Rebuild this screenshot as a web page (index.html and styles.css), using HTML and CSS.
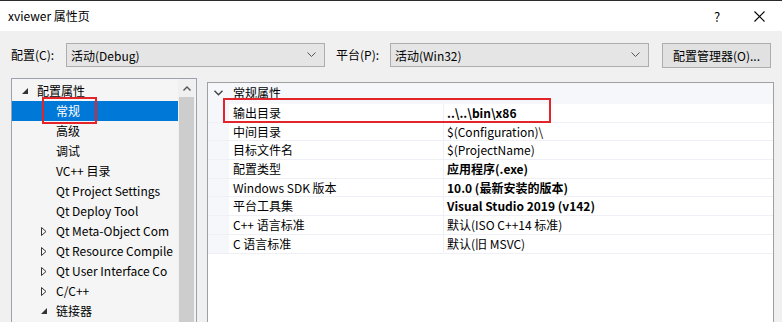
FILE: index.html
```html
<!DOCTYPE html>
<html lang="zh-CN">
<head>
  <meta charset="UTF-8">
  <title>xviewer 属性页</title>
  <link rel="stylesheet" href="styles.css">
</head>
<body>
  <div class="window">
    <header class="titlebar">
      <span class="title">xviewer 属性页</span>
      <div class="caption-btns">
        <span class="help">?</span>
        <span class="close">
          <svg width="11" height="11" viewBox="0 0 11 11"><path d="M0.5 0.5 L10.5 10.5 M10.5 0.5 L0.5 10.5" stroke="#000" stroke-width="1.1" fill="none"/></svg>
        </span>
      </div>
    </header>

    <div class="toolbar">
      <label class="lbl lbl-config">配置(C):</label>
      <div class="combo">
        <span>活动(Debug)</span>
        <svg class="chev" width="9" height="6" viewBox="0 0 9 6"><path d="M0.5 0.5 L4.5 4.5 L8.5 0.5" stroke="#555" fill="none"/></svg>
      </div>
      <label class="lbl lbl-platform">平台(P):</label>
      <div class="combo">
        <span>活动(Win32)</span>
        <svg class="chev" width="9" height="6" viewBox="0 0 9 6"><path d="M0.5 0.5 L4.5 4.5 L8.5 0.5" stroke="#555" fill="none"/></svg>
      </div>
      <button class="btn">配置管理器(O)...</button>
    </div>

    <div class="content">
      <div class="tree-panel">
        <ul class="tree">
          <li class="item lv0">
            <span class="twisty"><svg width="6" height="6" viewBox="0 0 6 6"><polygon points="6,0 6,6 0,6" fill="#333"/></svg></span>
            <span class="label">配置属性</span>
          </li>
          <li class="item lv1 selected">
            <span class="twisty"></span>
            <span class="label">常规</span>
            <span class="mark mark-tree"></span>
          </li>
          <li class="item lv1"><span class="twisty"></span><span class="label">高级</span></li>
          <li class="item lv1"><span class="twisty"></span><span class="label">调试</span></li>
          <li class="item lv1"><span class="twisty"></span><span class="label">VC++ 目录</span></li>
          <li class="item lv1"><span class="twisty"></span><span class="label">Qt Project Settings</span></li>
          <li class="item lv1"><span class="twisty"></span><span class="label">Qt Deploy Tool</span></li>
          <li class="item lv1">
            <span class="twisty"><svg width="6" height="9" viewBox="0 0 6 9"><polygon points="0.5,0.5 5,4.5 0.5,8.5" fill="none" stroke="#333"/></svg></span>
            <span class="label">Qt Meta-Object Com</span>
          </li>
          <li class="item lv1">
            <span class="twisty"><svg width="6" height="9" viewBox="0 0 6 9"><polygon points="0.5,0.5 5,4.5 0.5,8.5" fill="none" stroke="#333"/></svg></span>
            <span class="label">Qt Resource Compile</span>
          </li>
          <li class="item lv1">
            <span class="twisty"><svg width="6" height="9" viewBox="0 0 6 9"><polygon points="0.5,0.5 5,4.5 0.5,8.5" fill="none" stroke="#333"/></svg></span>
            <span class="label">Qt User Interface Co</span>
          </li>
          <li class="item lv1">
            <span class="twisty"><svg width="6" height="9" viewBox="0 0 6 9"><polygon points="0.5,0.5 5,4.5 0.5,8.5" fill="none" stroke="#333"/></svg></span>
            <span class="label">C/C++</span>
          </li>
          <li class="item lv1">
            <span class="twisty"><svg width="6" height="6" viewBox="0 0 6 6"><polygon points="6,0 6,6 0,6" fill="#333"/></svg></span>
            <span class="label">链接器</span>
          </li>
        </ul>
        <div class="vscroll">
          <div class="arrow">
            <svg width="8" height="5" viewBox="0 0 8 5"><path d="M0.5 4.5 L4 1 L7.5 4.5" stroke="#555" stroke-width="1.4" fill="none"/></svg>
          </div>
          <div class="thumb"></div>
        </div>
      </div>

      <div class="grid-panel">
        <div class="grid-header">
          <span class="gutter">
            <svg width="9" height="6" viewBox="0 0 9 6"><path d="M0.5 0.8 L4.5 4.8 L8.5 0.8" stroke="#444" stroke-width="1.4" fill="none"/></svg>
          </span>
          <span class="header-text">常规属性</span>
        </div>
        <div class="grid-row">
          <span class="gutter"></span>
          <span class="name">输出目录</span>
          <span class="value bold">..\..\bin\x86</span>
          <span class="mark mark-row"></span>
        </div>
        <div class="grid-row">
          <span class="gutter"></span>
          <span class="name">中间目录</span>
          <span class="value">$(Configuration)\</span>
        </div>
        <div class="grid-row">
          <span class="gutter"></span>
          <span class="name">目标文件名</span>
          <span class="value">$(ProjectName)</span>
        </div>
        <div class="grid-row">
          <span class="gutter"></span>
          <span class="name">配置类型</span>
          <span class="value bold">应用程序(.exe)</span>
        </div>
        <div class="grid-row">
          <span class="gutter"></span>
          <span class="name">Windows SDK 版本</span>
          <span class="value bold">10.0 (最新安装的版本)</span>
        </div>
        <div class="grid-row">
          <span class="gutter"></span>
          <span class="name">平台工具集</span>
          <span class="value bold">Visual Studio 2019 (v142)</span>
        </div>
        <div class="grid-row">
          <span class="gutter"></span>
          <span class="name">C++ 语言标准</span>
          <span class="value">默认(ISO C++14 标准)</span>
        </div>
        <div class="grid-row">
          <span class="gutter"></span>
          <span class="name">C 语言标准</span>
          <span class="value">默认(旧 MSVC)</span>
        </div>
      </div>
    </div>
  </div>
</body>
</html>
```

FILE: styles.css
```css
body {
  margin: 0;
  padding: 0;
  background: #f0f0f0;
  font-family: "Noto Sans CJK SC", sans-serif;
  font-size: 12px;
  color: #000;
  overflow: hidden;
}

.window {
  border-top: 1px solid #2b2b2b;
  height: 321px;
  overflow: hidden;
}

/* title bar */
.titlebar {
  height: 30px;
  background: #fff;
  display: flex;
  align-items: center;
  justify-content: space-between;
  padding-left: 8px;
}

.title {
  font-size: 12px;
  line-height: 16px;
}

.caption-btns {
  display: flex;
  align-items: center;
  height: 30px;
}

.help {
  width: 20px;
  text-align: center;
  font-size: 13px;
  margin-right: 27px;
}

.close {
  width: 11px;
  height: 11px;
  display: flex;
  margin-right: 17px;
}

/* toolbar */
.toolbar {
  display: flex;
  align-items: center;
  padding: 12px 0 0 11px;
  height: 24px;
}

.lbl {
  line-height: 16px;
}

.lbl-config {
  width: 55px;
}

.lbl-platform {
  width: 54px;
  margin-left: 11px;
}

.combo {
  width: 259px;
  height: 24px;
  box-sizing: border-box;
  border: 1px solid #adadad;
  background: #e5e5e5;
  display: flex;
  align-items: center;
  justify-content: space-between;
  padding: 0 8px 0 4px;
}

.chev {
  display: block;
}

.btn {
  margin-left: 13px;
  width: 109px;
  height: 25px;
  border: 1px solid #adadad;
  background: #e1e1e1;
  font-family: inherit;
  font-size: 12px;
  padding: 0;
  color: #000;
}

/* main area */
.content {
  display: flex;
  align-items: flex-start;
  gap: 10px;
  padding: 11px 0 0 11px;
}

.tree-panel {
  width: 186px;
  height: 260px;
  box-sizing: border-box;
  border: 1px solid #9aa3ad;
  background: #f5f5f5;
  display: flex;
}

.tree {
  list-style: none;
  margin: 0;
  padding: 2px 0 0 0;
  width: 166px;
  overflow: hidden;
}

.item {
  position: relative;
  height: 20px;
  display: flex;
  align-items: center;
  white-space: nowrap;
}

.item.lv0 {
  padding-left: 6px;
}

.item.lv1 {
  padding-left: 25px;
}

.item.selected {
  background: #0078d7;
  color: #fff;
}

.twisty {
  width: 14px;
  height: 20px;
  display: flex;
  align-items: center;
  justify-content: center;
  flex: none;
}

.label {
  margin-left: 5px;
  line-height: 16px;
}

.vscroll {
  width: 17px;
  display: flex;
  flex-direction: column;
  background: #f0f0f0;
}

.vscroll .arrow {
  height: 18px;
  display: flex;
  align-items: center;
  justify-content: center;
}

.vscroll .thumb {
  flex: 1;
  margin: 0 1px;
  background: #cdcdcd;
}

/* property grid */
.grid-panel {
  margin-top: 4px;
  width: 567px;
  height: 260px;
  box-sizing: border-box;
  border: 1px solid #a0a0a0;
  background: #fff;
}

.grid-header {
  height: 21px;
  display: flex;
  background: #f5f7fb;
}

.grid-header .gutter {
  align-items: flex-start;
  padding-top: 7px;
  box-sizing: border-box;
}

.header-text {
  padding-left: 4px;
  line-height: 19px;
}

.gutter {
  width: 21px;
  flex: none;
  display: flex;
  justify-content: center;
  background: #f5f7fb;
}

.grid-row {
  position: relative;
  display: flex;
  height: 18.7px;
  box-sizing: border-box;
  border-bottom: 1px solid #eef0f5;
  line-height: 17px;
}

.name {
  width: 214px;
  flex: none;
  padding-left: 4px;
  box-sizing: border-box;
  white-space: nowrap;
}

.value {
  flex: 1;
  border-left: 1px solid #eef0f5;
  padding-left: 3px;
  white-space: nowrap;
}

.bold {
  font-weight: 700;
}

/* red annotation boxes */
.mark {
  position: absolute;
  border: 2px solid #e3242b;
  box-sizing: border-box;
}

.mark-tree {
  left: 30px;
  top: -4px;
  width: 55px;
  height: 27px;
}

.mark-row {
  left: 15px;
  top: -6px;
  width: 328px;
  height: 25px;
}
```
